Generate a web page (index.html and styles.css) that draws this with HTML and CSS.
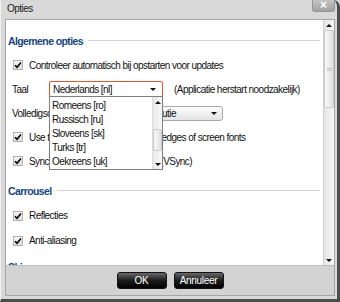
FILE: index.html
```html
<!DOCTYPE html>
<html lang="nl">
<head>
  <meta charset="UTF-8" />
  <title>Opties</title>
  <link rel="stylesheet" href="styles.css">
</head>
<body>

<div class="window">
  <div class="titlebar">
    <span class="title">Opties</span>
    <span class="close">&times;</span>
  </div>

  <div class="frame">
    <div class="content">
      <div class="pane">

        <!-- Algemene opties -->
        <div class="heading"><span>Algemene opties</span></div>
        <div class="row"><span class="box"><svg width="8" height="8" viewBox="0 0 8 8"><path d="M1 4.2 L3 6.2 L7 1.5" fill="none" stroke="#000" stroke-width="1.6"/></svg></span>Controleer automatisch bij opstarten voor updates</div>
        <div class="row field">
          <span class="label">Taal</span>
          <div class="select focus">
            <span class="value">Nederlands [nl]</span>
            <span class="arrow"></span>
            <div class="list">
              <ul>
                <li>Romeens [ro]</li>
                <li>Russisch [ru]</li>
                <li>Sloveens [sk]</li>
                <li>Turks [tr]</li>
                <li>Oekreens [uk]</li>
              </ul>
              <div class="mini-scroll">
                <span class="btn up"></span>
                <span class="track"><span class="thumb"></span></span>
                <span class="btn down"></span>
              </div>
            </div>
          </div>
          <span class="note">(Applicatie herstart noodzakelijk)</span>
        </div>
        <div class="row field">
          <span class="label wide">Volledigscherm</span>
          <div class="select plain">
            <span class="value">Huidige resolutie</span>
            <span class="arrow"></span>
          </div>
        </div>
        <div class="row"><span class="box"><svg width="8" height="8" viewBox="0 0 8 8"><path d="M1 4.2 L3 6.2 L7 1.5" fill="none" stroke="#000" stroke-width="1.6"/></svg></span>Use the system setting to smooth edges of screen fonts</div>
        <div class="row"><span class="box"><svg width="8" height="8" viewBox="0 0 8 8"><path d="M1 4.2 L3 6.2 L7 1.5" fill="none" stroke="#000" stroke-width="1.6"/></svg></span>Synchroniseer met de verversing (VSync)</div>

        <!-- Carrousel -->
        <div class="heading second"><span>Carrousel</span></div>
        <div class="row tall"><span class="box"><svg width="8" height="8" viewBox="0 0 8 8"><path d="M1 4.2 L3 6.2 L7 1.5" fill="none" stroke="#000" stroke-width="1.6"/></svg></span>Reflecties</div>
        <div class="row tall"><span class="box"><svg width="8" height="8" viewBox="0 0 8 8"><path d="M1 4.2 L3 6.2 L7 1.5" fill="none" stroke="#000" stroke-width="1.6"/></svg></span>Anti-aliasing</div>

        <div class="heading third"><span>Skins</span></div>
      </div>

      <div class="vscroll">
        <span class="btn up"></span>
        <span class="track"><span class="thumb"><span class="grip"></span></span></span>
        <span class="btn down"></span>
      </div>
    </div>

    <div class="buttons">
      <button>OK</button>
      <button>Annuleer</button>
    </div>
  </div>
</div>

</body>
</html>
```

FILE: styles.css
```css
/* Reset */
* {
  margin: 0; padding: 0; box-sizing: border-box;
}

body {
  background: #d6d6d6;
  font-family: 'Liberation Sans', Arial, sans-serif;
  font-size: 10px;
  letter-spacing: -0.55px;
  color: #111;
  overflow: hidden;
}

/* Window */
.window {
  width: 340px;
  height: 302px;
  display: flex;
  flex-direction: column;
  background: #d9d9d9;
  border-left: 1px solid #f2f2f2;
  border-right: 3px solid #4d4d4d;
  border-bottom: 3px solid #4d4d4d;
  border-top-right-radius: 7px;
  padding: 0 2px 3px 4px;
}

.titlebar {
  height: 19px;
  display: flex;
  justify-content: space-between;
  align-items: flex-start;
  padding-left: 2px;
}

.titlebar .title {
  line-height: 18px;
  color: #222;
}

.titlebar .close {
  width: 23px;
  height: 12px;
  line-height: 11px;
  text-align: center;
  color: #fff;
  font-weight: bold;
  font-size: 12px;
  letter-spacing: 0;
  background: linear-gradient(#c4c4c4, #a2a2a2);
  border: 1px solid #959595;
  border-top: none;
  border-radius: 0 0 3px 3px;
}

.frame {
  flex: 1;
  display: flex;
  flex-direction: column;
  border: 1px solid #a6a6a6;
}

.content {
  height: 246px;
  display: flex;
  background: #fff;
  border-bottom: 1px solid #bdbdbd;
}

.pane {
  flex: 1;
  overflow: hidden;
  padding: 8px 3px 0 2px;
}

/* Headings */
.heading {
  height: 25px;
  display: flex;
  align-items: center;
  gap: 5px;
  font-size: 10.5px;
  font-weight: bold;
  letter-spacing: -0.6px;
  color: #17467f;
}

.heading::after {
  content: "";
  flex: 1;
  height: 1px;
  background: #d2d2d2;
}

.heading.second {
  margin-top: 5px;
}

.heading.third {
  margin-top: 1px;
}

/* Rows */
.row {
  height: 24px;
  display: flex;
  align-items: center;
  padding-left: 5px;
  white-space: nowrap;
}

.row.tall {
  height: 25px;
}

.row.field {
  padding-left: 4px;
}

.box {
  width: 10px;
  height: 10px;
  margin-right: 6px;
  border: 1px solid #b3b3b3;
  background: linear-gradient(#f4f4f4, #dedede);
  display: flex;
  align-items: center;
  justify-content: center;
}

.label {
  width: 37px;
}

.label.wide {
  width: 93px;
}

/* Selects */
.select {
  position: relative;
  display: flex;
  align-items: center;
  justify-content: space-between;
  background: #fff;
}

.select.focus {
  width: 114px;
  height: 16px;
  border: 1px solid #e0562f;
  border-radius: 2px;
  padding: 0 6px 0 3px;
}

.select.plain {
  width: 118px;
  height: 15px;
  justify-content: flex-end;
  border: 1px solid #a9a9a9;
  border-radius: 3px;
  padding: 0 5px 0 4px;
  background: linear-gradient(#fdfdfd, #e3e3e3);
}

.select.plain .arrow {
  margin-left: 35px;
}

.arrow {
  width: 0;
  height: 0;
  border-left: 3px solid transparent;
  border-right: 3px solid transparent;
  border-top: 3px solid #111;
}

.note {
  margin-left: 11px;
}

/* Open dropdown list */
.list {
  position: absolute;
  top: 14px;
  left: -1px;
  width: 114px;
  height: 74px;
  display: flex;
  background: #fff;
  border: 1px solid #7f7f7f;
  z-index: 10;
}

.list ul {
  flex: 1;
  list-style: none;
  padding: 2px 0 0 2px;
}

.list li {
  line-height: 14px;
}

.mini-scroll {
  width: 10px;
  display: flex;
  flex-direction: column;
  background: linear-gradient(90deg, #e9e9e9, #f7f7f7);
  border-left: 1px solid #dcdcdc;
}

/* Scrollbars */
.vscroll {
  width: 11px;
  display: flex;
  flex-direction: column;
  background: linear-gradient(90deg, #e6e6e6, #f6f6f6);
  border-left: 1px solid #cfcfcf;
}

.btn {
  height: 10px;
  display: flex;
  align-items: center;
  justify-content: center;
}

.btn::before {
  content: "";
  border-left: 3px solid transparent;
  border-right: 3px solid transparent;
}

.btn.up::before {
  border-bottom: 3px solid #111;
}

.btn.down::before {
  border-top: 3px solid #111;
}

.track {
  flex: 1;
  display: flex;
  flex-direction: column;
}

.thumb {
  display: flex;
  align-items: center;
  justify-content: center;
  background: linear-gradient(90deg, #fafafa, #e0e0e0);
  border: 1px solid #c9c9c9;
  border-radius: 2px;
}

.vscroll .thumb {
  height: 78px;
}

.mini-scroll .thumb {
  height: 22px;
  margin-top: 22px;
}

.grip {
  width: 5px;
  height: 3px;
  border-top: 1px solid #bdbdbd;
  border-bottom: 1px solid #bdbdbd;
}

/* Buttons */
.buttons {
  flex: 1;
  display: flex;
  justify-content: center;
  align-items: center;
  gap: 7px;
  background: #d3d3d3;
}

.buttons button {
  width: 50px;
  height: 17px;
  font-family: 'Liberation Sans', Arial, sans-serif;
  font-size: 10px;
  letter-spacing: -0.3px;
  color: #fff;
  background: linear-gradient(#686868, #1c1c1c 50%, #000);
  border: 1px solid #111;
  border-radius: 3px;
}
```
